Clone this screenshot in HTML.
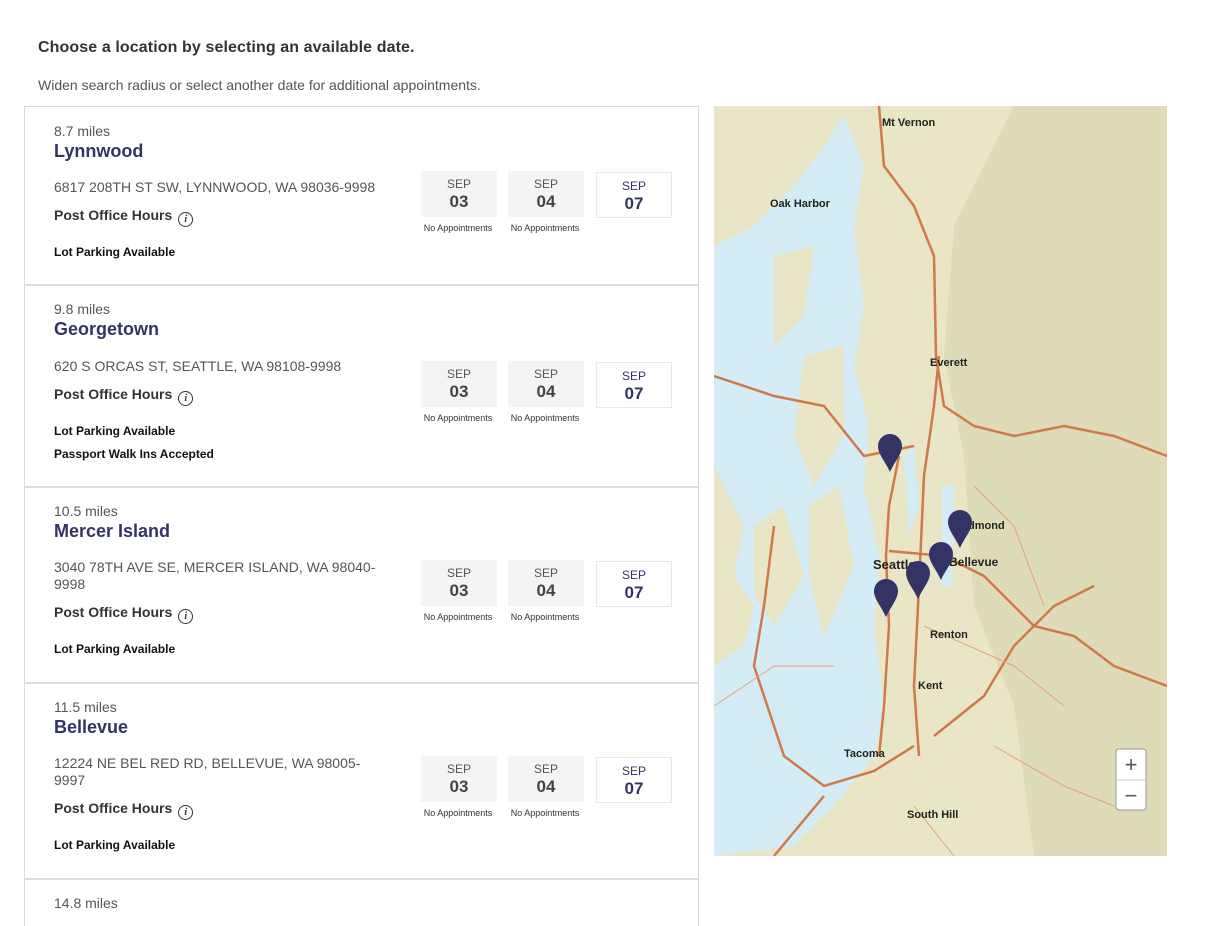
<!DOCTYPE html>
<html><head><meta charset="utf-8"><style>
*{box-sizing:border-box;margin:0;padding:0}
body{width:1221px;height:915px;overflow:hidden;background:#fff;font-family:"Liberation Sans",Arial,sans-serif;position:relative}
.h1{position:absolute;left:38px;top:39px;font-size:16px;font-weight:bold;color:#333;letter-spacing:0.1px}
.h2{position:absolute;left:38px;top:77px;font-size:14px;color:#555}
.list{position:absolute;left:24px;top:106px;width:675px;height:820px;border:1px solid #d9d9d9;border-bottom:none}
.card{position:absolute;left:0;width:673px;border-bottom:2px solid #dcdcdc}
.mi{position:absolute;left:29px;font-size:14px;color:#555}
.nm{position:absolute;left:29px;font-size:18px;font-weight:bold;color:#333366}
.ad{position:absolute;left:29px;font-size:14px;color:#555;width:330px;line-height:17px}
.po{position:absolute;left:29px;font-size:14px;font-weight:bold;color:#333}
.po i{display:inline-block;width:15px;height:15px;border:1.3px solid #333;border-radius:50%;font-size:10px;text-align:center;line-height:13px;margin-left:6px;vertical-align:-2px;font-family:"Liberation Serif",serif}
.lp{position:absolute;left:29px;font-size:12px;font-weight:bold;color:#111}
.d{position:absolute;width:76px;height:46px;text-align:center;color:#555;background:#f4f4f4}
.d b{display:block;font-size:17px;color:#444;margin-top:1px}
.d span{display:block;font-size:12px;margin-top:6px}
.d.w{background:#fff;border:1px solid #e8e8e8;color:#333366}
.d.w b{color:#333366}
.na{position:absolute;width:90px;text-align:center;font-size:9px;color:#333}
.map{position:absolute;left:714px;top:106px;width:453px;height:750px;background:#e9e7c9;overflow:hidden}
</style></head><body>
<div class="h1">Choose a location by selecting an available date.</div>
<div class="h2">Widen search radius or select another date for additional appointments.</div>
<div class="list">
<div class="card" style="top:0;height:179px">
<div class="mi" style="top:16px">8.7 miles</div>
<div class="nm" style="top:34px">Lynnwood</div>
<div class="ad" style="top:72px">6817 208TH ST SW, LYNNWOOD, WA 98036-9998</div>
<div class="po" style="top:100px">Post Office Hours<i>i</i></div>
<div class="lp" style="top:138px">Lot Parking Available</div>
<div class="d" style="left:396px;top:64px"><span>SEP</span><b>03</b></div>
<div class="d" style="left:483px;top:64px"><span>SEP</span><b>04</b></div>
<div class="d w" style="left:571px;top:65px"><span>SEP</span><b>07</b></div>
<div class="na" style="left:388px;top:116px">No Appointments</div>
<div class="na" style="left:475px;top:116px">No Appointments</div>
</div>
<div class="card" style="top:179px;height:202px">
<div class="mi" style="top:15px">9.8 miles</div>
<div class="nm" style="top:33px">Georgetown</div>
<div class="ad" style="top:72px">620 S ORCAS ST, SEATTLE, WA 98108-9998</div>
<div class="po" style="top:100px">Post Office Hours<i>i</i></div>
<div class="lp" style="top:138px">Lot Parking Available</div>
<div class="lp" style="top:161px">Passport Walk Ins Accepted</div>
<div class="d" style="left:396px;top:75px"><span>SEP</span><b>03</b></div>
<div class="d" style="left:483px;top:75px"><span>SEP</span><b>04</b></div>
<div class="d w" style="left:571px;top:76px"><span>SEP</span><b>07</b></div>
<div class="na" style="left:388px;top:127px">No Appointments</div>
<div class="na" style="left:475px;top:127px">No Appointments</div>
</div>
<div class="card" style="top:381px;height:196px">
<div class="mi" style="top:15px">10.5 miles</div>
<div class="nm" style="top:33px">Mercer Island</div>
<div class="ad" style="top:71px">3040 78TH AVE SE, MERCER ISLAND, WA 98040-9998</div>
<div class="po" style="top:116px">Post Office Hours<i>i</i></div>
<div class="lp" style="top:154px">Lot Parking Available</div>
<div class="d" style="left:396px;top:72px"><span>SEP</span><b>03</b></div>
<div class="d" style="left:483px;top:72px"><span>SEP</span><b>04</b></div>
<div class="d w" style="left:571px;top:73px"><span>SEP</span><b>07</b></div>
<div class="na" style="left:388px;top:124px">No Appointments</div>
<div class="na" style="left:475px;top:124px">No Appointments</div>
</div>
<div class="card" style="top:577px;height:196px">
<div class="mi" style="top:15px">11.5 miles</div>
<div class="nm" style="top:33px">Bellevue</div>
<div class="ad" style="top:71px">12224 NE BEL RED RD, BELLEVUE, WA 98005-9997</div>
<div class="po" style="top:116px">Post Office Hours<i>i</i></div>
<div class="lp" style="top:154px">Lot Parking Available</div>
<div class="d" style="left:396px;top:72px"><span>SEP</span><b>03</b></div>
<div class="d" style="left:483px;top:72px"><span>SEP</span><b>04</b></div>
<div class="d w" style="left:571px;top:73px"><span>SEP</span><b>07</b></div>
<div class="na" style="left:388px;top:124px">No Appointments</div>
<div class="na" style="left:475px;top:124px">No Appointments</div>
</div>
<div class="mi" style="top:788px">14.8 miles</div>
</div>

<div class="map">
<svg width="453" height="750" viewBox="0 0 453 750">
<rect width="453" height="750" fill="#e8e6c7"/>
<path d="M300 0 L453 0 L453 750 L320 750 L300 600 L260 500 L250 350 L230 250 L240 120 Z" fill="#dedcb8"/>
<g fill="#d3ecf5">
<path d="M0 140 L40 120 L80 80 L110 40 L130 10 L150 60 L140 120 L150 200 L140 260 L155 320 L150 380 L165 450 L160 520 L170 600 L160 650 L120 700 L80 740 L0 750 L0 560 L30 540 L40 500 L20 470 L30 420 L10 380 L0 360 Z"/>
<path d="M60 150 L100 140 L90 210 L60 240 Z" fill="#e8e6c7"/>
<path d="M90 250 L130 240 L130 330 L100 380 L80 330 Z" fill="#e8e6c7"/>
<path d="M40 420 L70 400 L90 470 L60 520 L40 490 Z" fill="#e8e6c7"/>
<path d="M95 400 L125 380 L140 460 L110 530 L95 470 Z" fill="#e8e6c7"/>
<path d="M190 350 L200 340 L205 400 L195 430 Z"/>
<path d="M228 380 L240 380 L238 480 L228 480 Z"/>
</g>
<g fill="none" stroke="#cf7a4c" stroke-width="2.5">
<path d="M165 0 L170 60 L200 100 L220 150 L222 250 L230 300 L260 320 L300 330 L350 320 L400 330 L453 350"/>
<path d="M185 350 L175 400 L172 450 L175 520 L170 600 L165 650"/>
<path d="M225 250 L220 300 L210 370 L205 480 L200 580 L205 650"/>
<path d="M60 420 L50 500 L40 560 L70 650 L110 680 L160 665 L200 640"/>
<path d="M175 445 L230 450 L270 470 L320 520 L360 530 L400 560 L453 580"/>
<path d="M380 480 L340 500 L300 540 L270 590 L220 630"/>
<path d="M110 690 L60 750"/>
<path d="M0 270 L60 290 L110 300 L150 350 L200 340"/>
</g>
<g fill="none" stroke="#e9a07a" stroke-width="1">
<path d="M0 600 L60 560 L120 560"/><path d="M260 380 L300 420 L330 500"/><path d="M210 520 L300 560 L350 600"/><path d="M280 640 L350 680 L400 700"/><path d="M200 700 L240 750"/>
</g>
<g font-family="Liberation Sans,Arial,sans-serif" font-size="11" fill="#222" font-weight="bold">
<text x="168" y="20">Mt Vernon</text>
<text x="56" y="101">Oak Harbor</text>
<text x="216" y="260">Everett</text>
<text x="159" y="463" font-size="13">Seattle</text>
<text x="240" y="423">Redmond</text>
<text x="235" y="460" font-size="12">Bellevue</text>
<text x="216" y="532">Renton</text>
<text x="204" y="583">Kent</text>
<text x="130" y="651">Tacoma</text>
<text x="193" y="712">South Hill</text>
</g>
<g fill="#333366">
<path d="M176 328 a12 12 0 0 1 12 12 c0 8 -7 15 -12 26 c-5 -11 -12 -18 -12 -26 a12 12 0 0 1 12 -12z"/>
<path d="M246 404 a12 12 0 0 1 12 12 c0 8 -7 15 -12 26 c-5 -11 -12 -18 -12 -26 a12 12 0 0 1 12 -12z"/>
<path d="M227 436 a12 12 0 0 1 12 12 c0 8 -7 15 -12 26 c-5 -11 -12 -18 -12 -26 a12 12 0 0 1 12 -12z"/>
<path d="M204 455 a12 12 0 0 1 12 12 c0 8 -7 15 -12 26 c-5 -11 -12 -18 -12 -26 a12 12 0 0 1 12 -12z"/>
<path d="M172 473 a12 12 0 0 1 12 12 c0 8 -7 15 -12 26 c-5 -11 -12 -18 -12 -26 a12 12 0 0 1 12 -12z"/>
</g>
<rect x="402" y="643" width="30" height="61" rx="3" fill="#fff" stroke="#999"/>
<line x1="402" y1="674" x2="432" y2="674" stroke="#ccc"/>
<text x="417" y="666" text-anchor="middle" font-size="22" fill="#555" font-family="Liberation Sans,sans-serif">+</text>
<text x="417" y="697" text-anchor="middle" font-size="22" fill="#555" font-family="Liberation Sans,sans-serif">−</text>
</svg>
</div>
</body></html>
